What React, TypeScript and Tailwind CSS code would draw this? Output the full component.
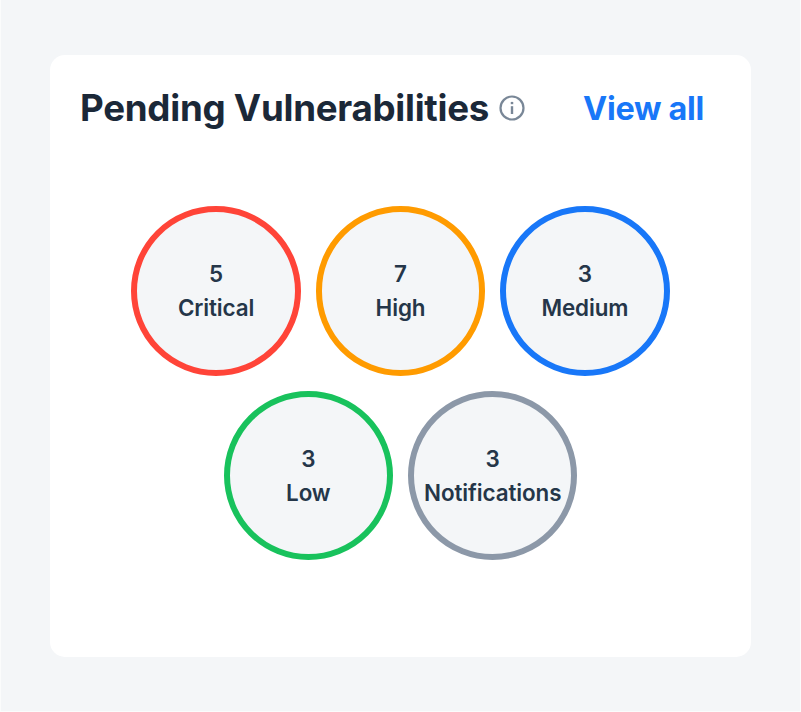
type Severity = { count: number; label: string; ring: string };

const topRow: Severity[] = [
  { count: 5, label: "Critical", ring: "border-[#ff4438]" },
  { count: 7, label: "High", ring: "border-[#ff9b00]" },
  { count: 3, label: "Medium", ring: "border-[#1877f8]" },
];

const bottomRow: Severity[] = [
  { count: 3, label: "Low", ring: "border-[#18c25c]" },
  { count: 3, label: "Notifications", ring: "border-[#8c98a8]" },
];

function Bubble({ count, label, ring }: Severity) {
  return (
    <div
      className={`flex size-[169.4px] shrink-0 flex-col items-center justify-center rounded-full border-[6px] bg-[#f4f6f8] pt-px text-[22.4px] leading-[34px] font-semibold text-[#253649] ${ring}`}
    >
      <span>{count}</span>
      <span className="tracking-[-0.1px] whitespace-nowrap">{label}</span>
    </div>
  );
}

function InfoIcon() {
  return (
    <svg className="size-[26px] shrink-0" viewBox="0 0 26 26" fill="none">
      <circle cx="13" cy="13" r="11.5" stroke="#798797" strokeWidth="2.2" />
      <path d="M13 11.2V19" stroke="#798797" strokeWidth="2.4" />
      <path d="M13 6.9V9.2" stroke="#798797" strokeWidth="2.5" />
    </svg>
  );
}

export default function App() {
  return (
    <div className="h-[712px] w-[801px] overflow-hidden bg-[#fbfcfc] px-px pb-px font-['Inter',sans-serif]">
      <main className="h-[711px] bg-[#f4f6f8] pt-[55px] pl-[49px]">
        <section className="h-[602px] w-[701px] rounded-[15px] bg-white pt-[29px]">
          <header className="flex h-[48px] items-center pr-[47px] pl-[30px]">
            <h1 className="w-[419px] text-[36.7px] leading-[48px] font-bold tracking-[-0.27px] whitespace-nowrap text-[#1b2838]">
              Pending Vulnerabilities
            </h1>
            <InfoIcon />
            <a className="mt-px ml-auto text-[32.4px] leading-[48px] font-bold tracking-[-0.3px] whitespace-nowrap text-[#1877f8]">
              View all
            </a>
          </header>
          <div className="mt-[74.3px] flex flex-col items-center gap-[15px]">
            <div className="flex gap-[15px]">
              {topRow.map((s) => (
                <Bubble key={s.label} {...s} />
              ))}
            </div>
            <div className="flex gap-[15px]">
              {bottomRow.map((s) => (
                <Bubble key={s.label} {...s} />
              ))}
            </div>
          </div>
        </section>
      </main>
    </div>
  );
}
